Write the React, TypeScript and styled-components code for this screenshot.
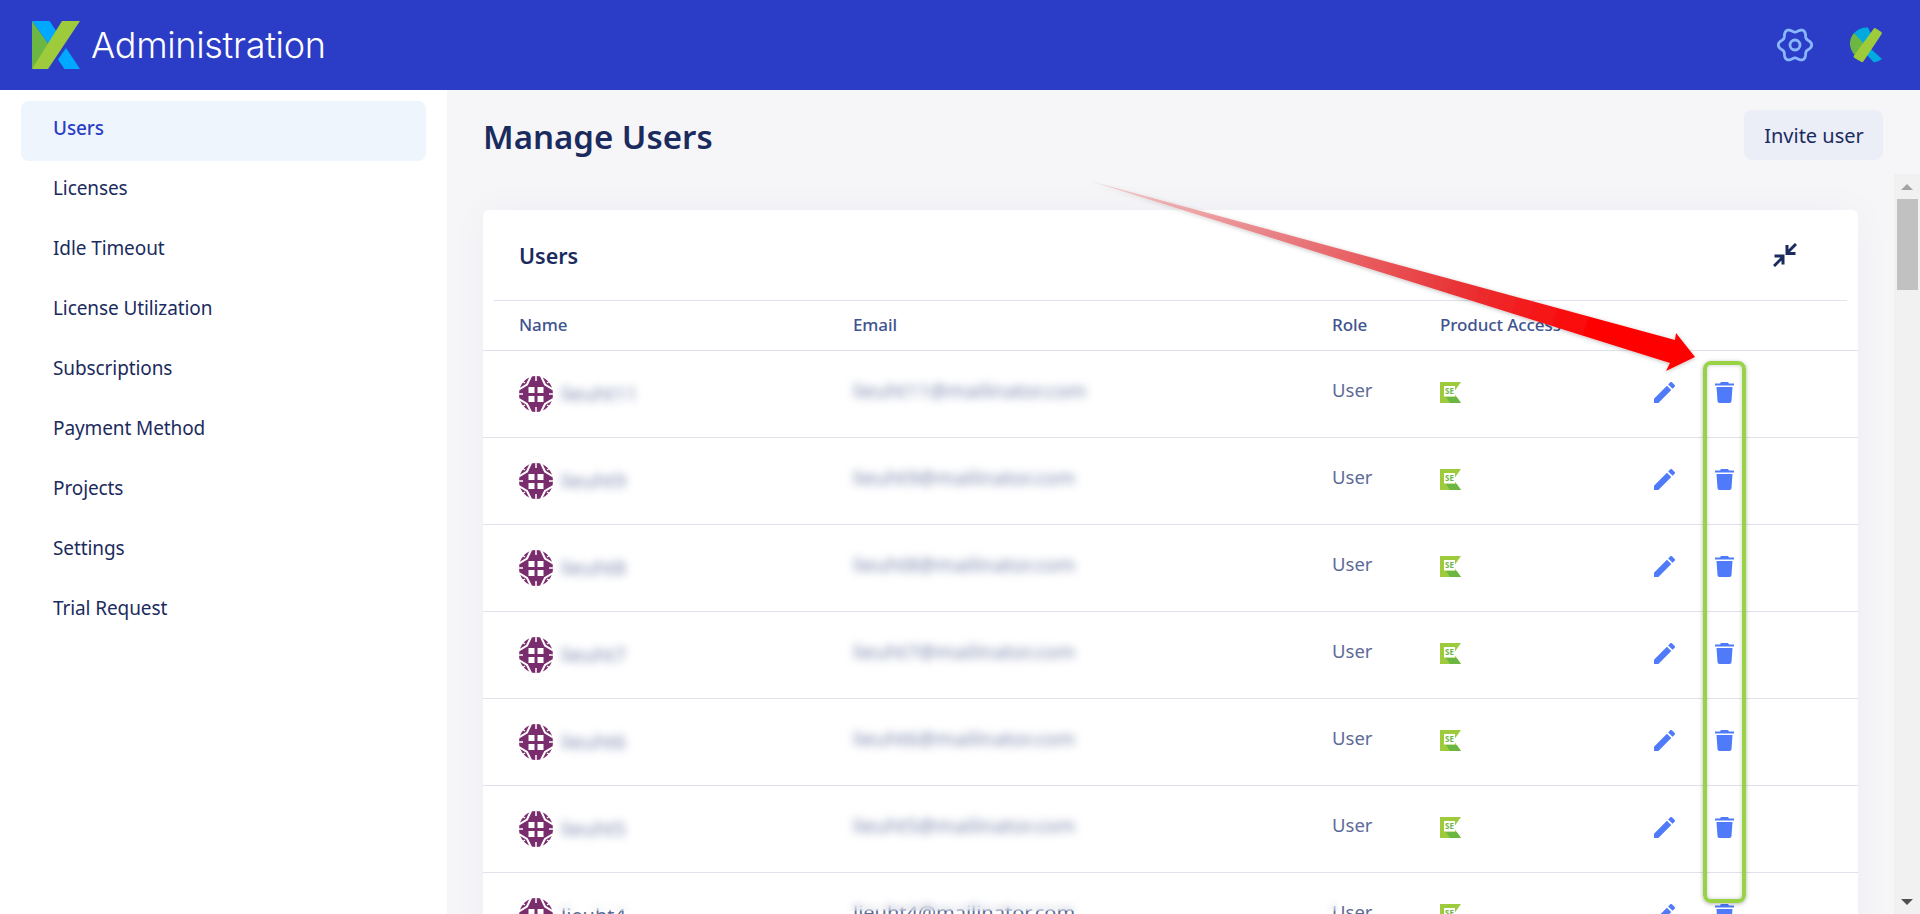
import React from 'react';
import styled, { createGlobalStyle } from 'styled-components';

const GlobalStyle = createGlobalStyle`
  html, body { margin: 0; padding: 0; height: 100%; overflow: hidden; background: #fff; }
  body { font-family: "Noto Sans", "Open Sans", Arial, sans-serif; }
`;

const Page = styled.div`
  position: relative;
  display: flex;
  flex-direction: column;
  width: 1920px;
  height: 914px;
  overflow: hidden;
`;

const Header = styled.header`
  flex: none;
  display: flex;
  align-items: center;
  height: 90px;
  padding: 0 38px 0 32px;
  background: #2b3dc6;
`;

const Brand = styled.div`
  display: flex;
  align-items: center;
  gap: 11px;
  flex: 1;
`;

const BrandName = styled.span`
  font-family: "Inter", "Lato", sans-serif;
  font-weight: 300;
  font-size: 36px;
  letter-spacing: -0.3px;
  color: #fff;
`;

const HeaderActions = styled.div`
  display: flex;
  align-items: center;
  gap: 37px;
`;

const Body = styled.div`
  flex: 1;
  display: flex;
  min-height: 0;
`;

const Sidebar = styled.nav`
  flex: none;
  display: flex;
  flex-direction: column;
  width: 447px;
  padding: 11px 21px 0;
  box-sizing: border-box;
  background: #fff;
`;

const NavItem = styled.div<{ $active?: boolean }>`
  display: flex;
  align-items: center;
  height: 60px;
  padding-left: 32px;
  padding-bottom: 7px;
  box-sizing: border-box;
  border-radius: 8px;
  font-size: 19px;
  letter-spacing: -0.1px;
  font-weight: ${(p) => (p.$active ? 500 : 400)};
  color: ${(p) => (p.$active ? '#2b3dc6' : '#1b2b5e')};
  background: ${(p) => (p.$active ? '#eef5fd' : 'transparent')};
`;

const Main = styled.main`
  flex: 1;
  display: flex;
  flex-direction: column;
  min-width: 0;
  background: #f6f6f9;
`;

const TitleRow = styled.div`
  flex: none;
  display: flex;
  justify-content: space-between;
  height: 84px;
  padding: 20px 37px 0;
  box-sizing: border-box;
`;

const Title = styled.h1`
  margin: 2px 0 0 -1px;
  font-size: 33px;
  line-height: 50px;
  font-weight: 600;
  color: #1b2b5e;
`;

const InviteButton = styled.button`
  width: 139px;
  height: 50px;
  padding: 0 0 0 1px;
  border: 0;
  border-radius: 8px;
  font-family: inherit;
  font-size: 20px;
  font-weight: 400;
  color: #1b2b5e;
  background: #ebeef7;
`;

const ScrollArea = styled.div`
  flex: 1;
  display: flex;
  min-height: 0;
`;

const ScrollContent = styled.div`
  flex: 1;
  min-width: 0;
  overflow: hidden;
  padding: 36px 36px 0 36px;
`;

const Rail = styled.div`
  flex: none;
  display: flex;
  flex-direction: column;
  align-items: center;
  width: 26px;
  background: #f1f1f1;
`;

const RailButton = styled.div<{ $down?: boolean }>`
  flex: none;
  display: flex;
  align-items: center;
  justify-content: center;
  height: 25px;
  &::before {
    content: '';
    border-left: 6px solid transparent;
    border-right: 6px solid transparent;
    ${(p) =>
      p.$down ? 'border-top: 6px solid #505050;' : 'border-bottom: 6px solid #a3a3a3;'}
  }
`;

const RailThumb = styled.div`
  flex: none;
  width: 21px;
  height: 91px;
  background: #c1c1c1;
`;

const RailSpacer = styled.div`
  flex: 1;
`;

const Card = styled.section`
  background: #fff;
  border-radius: 6px;
  box-shadow: 0 0 40px rgba(30, 40, 90, 0.035);
`;

const CardHead = styled.div`
  display: flex;
  align-items: center;
  justify-content: space-between;
  height: 91px;
  margin: 0 11px 0 11px;
  padding: 0 50px 0 25px;
  box-sizing: border-box;
  border-bottom: 1px solid #e0e2ec;
`;

const CardTitle = styled.h2`
  margin: 0;
  font-size: 21.5px;
  font-weight: 600;
  color: #1b2b5e;
`;

const columns = '334px 479px 108px 214px 61px 1fr';

const TableHead = styled.div`
  display: grid;
  grid-template-columns: ${columns};
  align-items: center;
  height: 50px;
  padding: 0 0 2px 36px;
  box-sizing: border-box;
  border-bottom: 1px solid #e0e2ec;
  font-size: 17px;
  font-weight: 500;
  letter-spacing: -0.1px;
  color: #3f5490;
`;

const Row = styled.div`
  display: grid;
  grid-template-columns: ${columns};
  align-items: center;
  height: 87px;
  padding-left: 36px;
  box-sizing: border-box;
  border-bottom: 1px solid #e0e2ec;
  font-size: 18.5px;
  color: #5d6b98;
`;

const NameCell = styled.div`
  display: flex;
  align-items: center;
  gap: 8px;
`;

const Blurred = styled.span<{ $email?: boolean }>`
  filter: blur(4px);
  color: #7f8ab0;
  font-size: 20px;
  margin-top: ${(p) => (p.$email ? '-8px' : '-2px')};
`;

const HalfBlurred = styled.span<{ $email?: boolean }>`
  position: relative;
  color: #5d6b98;
  font-size: 20px;
  margin-top: ${(p) => (p.$email ? '-8px' : '-2px')};
  &::after {
    content: '';
    position: absolute;
    left: -6px;
    right: -6px;
    top: -12px;
    height: ${(p) => (p.$email ? '24px' : '21px')};
    backdrop-filter: blur(4px);
  }
`;

const RoleText = styled.span`
  margin-top: -9px;
`;

const IconCell = styled.div`
  display: flex;
  align-items: center;
  margin-top: -4px;
`;

const Highlight = styled.div`
  position: absolute;
  left: 1703px;
  top: 361px;
  width: 43px;
  height: 542px;
  box-sizing: border-box;
  border: 4px solid #97d344;
  border-radius: 8px;
  box-shadow: 0 1px 4px rgba(0, 0, 0, 0.3), inset 0 0 4px rgba(0, 0, 0, 0.2);
`;

const ArrowLayer = styled.svg`
  position: absolute;
  left: 0;
  top: 0;
  pointer-events: none;
`;

const Logo = () => (
  <svg width="48" height="48" viewBox="0 0 48 48">
    <path d="M0 0h17.500L27 14 18.500 26z" fill="#00a9ff" />
    <path d="M0 0l18.500 26L0 48z" fill="#6cb644" />
    <path d="M30 0h18L16 48H0z" fill="#9dcb3b" />
    <path d="M34 27l14 21H32.500L26 38.500z" fill="#00a9ff" />
  </svg>
);

const gearPath = (() => {
  const pts: string[] = [];
  for (let i = 0; i < 120; i++) {
    const t = (i / 120) * Math.PI * 2;
    const r = 14.8 + 1.9 * Math.cos(6 * t);
    pts.push(`${(18 + r * Math.cos(t)).toFixed(2)} ${(18 + r * Math.sin(t)).toFixed(2)}`);
  }
  return `M${pts.join('L')}Z`;
})();

const GearIcon = () => (
  <svg width="36" height="36" viewBox="0 0 36 36" fill="none" stroke="#8ab8ff" strokeWidth="2.800">
    <path d={gearPath} strokeLinejoin="round" />
    <circle cx="18" cy="18" r="5" />
  </svg>
);

const AccountMark = () => (
  <svg width="32" height="36" viewBox="0 0 32 36">
    <path d="M4 6A17 17 0 0 1 18 .5L23 11 15 20z" fill="#00a9e0" />
    <path d="M4 6l12 13-7 12A17 17 0 0 1 0 18 17 17 0 0 1 4 6z" fill="#6cb644" />
    <path d="M20 21l12 11a16 16 0 0 1-8 3.500L16 27z" fill="#00a9e0" />
    <path d="M26 1.500l5 3.200a1.800 1.800 0 0 1 .5 2.500L13.500 34.300a1.800 1.800 0 0 1-2.500.5L4.500 31a1.800 1.800 0 0 1-.5-2.500L23.500 2a1.800 1.800 0 0 1 2.500-.5z" fill="#9dcb3b" />
  </svg>
);

const CollapseIcon = () => (
  <svg width="24" height="24" viewBox="0 0 24 24" fill="none" stroke="#1b2b5e" strokeWidth="3">
    <path d="M14 2v8.500h8.500M14 10l9-9" />
    <path d="M10 21.500V13H1.500M10 14l-9 9" />
  </svg>
);

const Avatar = () => (
  <svg width="34" height="36" viewBox="0 0 34 36">
    <ellipse cx="17" cy="18" rx="17" ry="18" fill="#7a2d6d" />
    <g fill="#fff">
      <rect x="9.500" y="11" width="6" height="6" />
      <rect x="18.500" y="11" width="6" height="6" />
      <rect x="9.500" y="20" width="6" height="6" />
      <rect x="18.500" y="20" width="6" height="6" />
    </g>
    <g stroke="#fff" fill="none" strokeWidth="2">
      <path d="M0 13.500L8 8.500 12 0M22 0l4 8.500 8 5M34 23l-8 5-4 8M12 36l-4-8-8-5" />
      <path d="M17 0v5M0 18h4M34 18h-4M17 36v-5" strokeWidth="1.500" />
      <path d="M3 5l3 2M31 5l-3 2M3 31l3-2M31 31l-3-2" strokeWidth="1.500" />
    </g>
  </svg>
);

const SeIcon = () => (
  <svg width="21" height="21" viewBox="0 0 21 21">
    <path d="M0 0h21l-7.500 10.500L21 21H0z" fill="#9dcb3b" />
    <path d="M6 15h10.700L21 21H10z" fill="#6cb644" />
    <rect x="4" y="4" width="11" height="10.500" fill="#fff" />
    <text x="9.500" y="12.300" textAnchor="middle" fontSize="8" fontWeight="700" fontFamily="Noto Sans" fill="#6cb644">
      SE
    </text>
  </svg>
);

const PencilIcon = () => (
  <svg width="21" height="21" viewBox="3 3 18 18" fill="#4f7bfb">
    <path d="M3 17.250V21h3.750L17.810 9.940l-3.750-3.750L3 17.250zM20.710 7.040c.39-.39.39-1.020 0-1.410l-2.340-2.340c-.39-.39-1.020-.39-1.410 0l-1.830 1.830 3.750 3.750 1.830-1.830z" />
  </svg>
);

const TrashIcon = () => (
  <svg width="19" height="21" viewBox="0 0 19 21" fill="#4f7bfb">
    <path d="M6 0h7l1 1.500h5v2H0v-2h5z" />
    <path d="M1.500 5h16l-1 14a2 2 0 0 1-2 2h-10a2 2 0 0 1-2-2z" />
  </svg>
);

const RedArrow = () => (
  <ArrowLayer width="1920" height="914">
    <defs>
      <linearGradient id="arrowFill" gradientUnits="userSpaceOnUse" x1="1090" y1="181" x2="1695" y2="357">
        <stop offset="0" stopColor="#f08a8a" stopOpacity="0.35" />
        <stop offset="0.3" stopColor="#e8787c" stopOpacity="0.9" />
        <stop offset="0.6" stopColor="#e83538" />
        <stop offset="0.85" stopColor="#ff0000" />
      </linearGradient>
      <filter id="arrowShadow" x="-5%" y="-20%" width="110%" height="140%">
        <feDropShadow dx="0" dy="1" stdDeviation="2" floodColor="#000" floodOpacity="0.25" />
      </filter>
    </defs>
    <path
      d="M1090 181L1675 340L1676 333L1695 357L1666 371L1670 363Z"
      fill="url(#arrowFill)"
      filter="url(#arrowShadow)"
    />
  </ArrowLayer>
);

const navItems = [
  'Users',
  'Licenses',
  'Idle Timeout',
  'License Utilization',
  'Subscriptions',
  'Payment Method',
  'Projects',
  'Settings',
  'Trial Request',
];

const users = ['lieuht11', 'lieuht9', 'lieuht8', 'lieuht7', 'lieuht6', 'lieuht5', 'lieuht4'];

export default function App() {
  return (
    <Page>
      <GlobalStyle />
      <Header>
        <Brand>
          <Logo />
          <BrandName>Administration</BrandName>
        </Brand>
        <HeaderActions>
          <GearIcon />
          <AccountMark />
        </HeaderActions>
      </Header>
      <Body>
        <Sidebar>
          {navItems.map((item, i) => (
            <NavItem key={item} $active={i === 0}>
              {item}
            </NavItem>
          ))}
        </Sidebar>
        <Main>
          <TitleRow>
            <Title>Manage Users</Title>
            <InviteButton>Invite user</InviteButton>
          </TitleRow>
          <ScrollArea>
            <ScrollContent>
              <Card>
                <CardHead>
                  <CardTitle>Users</CardTitle>
                  <CollapseIcon />
                </CardHead>
                <TableHead>
                  <span>Name</span>
                  <span>Email</span>
                  <span>Role</span>
                  <span>Product Access</span>
                </TableHead>
                {users.map((name, i) => {
                  const Masked = i === users.length - 1 ? HalfBlurred : Blurred;
                  return (
                    <Row key={name}>
                      <NameCell>
                        <Avatar />
                        <Masked>{name}</Masked>
                      </NameCell>
                      <Masked $email>{name}@mailinator.com</Masked>
                      <RoleText>User</RoleText>
                      <IconCell>
                        <SeIcon />
                      </IconCell>
                      <IconCell>
                        <PencilIcon />
                      </IconCell>
                      <IconCell>
                        <TrashIcon />
                      </IconCell>
                    </Row>
                  );
                })}
              </Card>
            </ScrollContent>
            <Rail>
              <RailButton />
              <RailThumb />
              <RailSpacer />
              <RailButton $down />
            </Rail>
          </ScrollArea>
        </Main>
      </Body>
      <Highlight />
      <RedArrow />
    </Page>
  );
}
